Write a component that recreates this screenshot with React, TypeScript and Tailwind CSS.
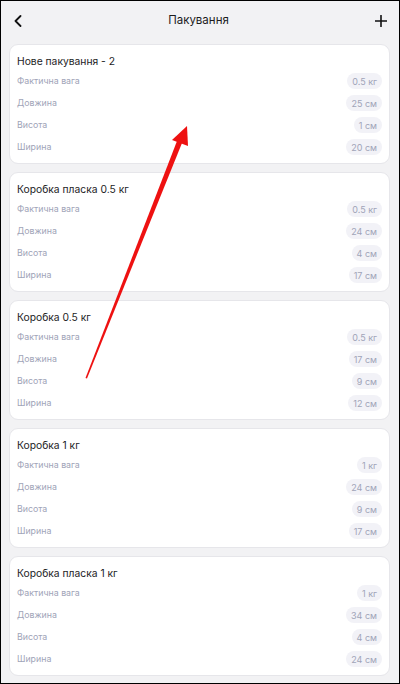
import React from "react";

type Pack = { title: string; rows: [string, string][] };

const packs: Pack[] = [
  { title: "Нове пакування - 2", rows: [["Фактична вага", "0.5 кг"], ["Довжина", "25 см"], ["Висота", "1 см"], ["Ширина", "20 см"]] },
  { title: "Коробка пласка 0.5 кг", rows: [["Фактична вага", "0.5 кг"], ["Довжина", "24 см"], ["Висота", "4 см"], ["Ширина", "17 см"]] },
  { title: "Коробка 0.5 кг", rows: [["Фактична вага", "0.5 кг"], ["Довжина", "17 см"], ["Висота", "9 см"], ["Ширина", "12 см"]] },
  { title: "Коробка 1 кг", rows: [["Фактична вага", "1 кг"], ["Довжина", "24 см"], ["Висота", "9 см"], ["Ширина", "17 см"]] },
  { title: "Коробка пласка 1 кг", rows: [["Фактична вага", "1 кг"], ["Довжина", "34 см"], ["Висота", "4 см"], ["Ширина", "24 см"]] },
];

function Card({ p }: { p: Pack }) {
  return (
    <div className="bg-white border border-[#e6e6ea] rounded-[9px] pl-[7px] pr-[7px] pt-[7px] pb-[5px]">
      <div className="h-[18px] flex items-center text-[10.3px] text-[#1c1c1e] leading-none">{p.title}</div>
      {p.rows.map(([l, v]) => (
        <div key={l} className="h-[22px] flex items-center justify-between">
          <span className="text-[8.8px] text-[#a0a4b8] leading-none">{l}</span>
          <span className="h-[16px] px-[5px] rounded-full bg-[#f2f2f7] text-[9px] text-[#a0a4b8] flex items-center leading-none">{v}</span>
        </div>
      ))}
    </div>
  );
}

export default function App() {
  return (
    <div
      className="relative w-[400px] h-[684px] overflow-hidden bg-[#f2f2f4] border border-black box-border"
      style={{ fontFamily: "Inter, 'Noto Sans', sans-serif" }}
    >
      <div className="h-[40px] flex items-center justify-between pl-[13px] pr-[12px]">
        <svg width="8" height="12" viewBox="0 0 8 12" fill="none">
          <path d="M6.5 1 L1.5 6 L6.5 11" stroke="#111" strokeWidth="1.8" strokeLinecap="round" strokeLinejoin="round" />
        </svg>
        <div className="text-[11.5px] text-[#1c1c1e]">Пакування</div>
        <svg width="12" height="12" viewBox="0 0 12 12" fill="none">
          <path d="M6 0.5 V11.5 M0.5 6 H11.5" stroke="#111" strokeWidth="1.6" strokeLinecap="round" />
        </svg>
      </div>
      <div className="flex flex-col gap-[8px] ml-[8px] mr-[9px] mt-[3px]">
        {packs.map((p) => (
          <Card key={p.title} p={p} />
        ))}
      </div>
      <svg className="absolute left-0 top-0 pointer-events-none" width="400" height="684" viewBox="0 0 400 684">
        <polygon points="84.5,377 86,377.5 181,142 176,140" fill="#ee1111" />
        <polygon points="186,125 187,145 171,139" fill="#ee1111" />
      </svg>
    </div>
  );
}
